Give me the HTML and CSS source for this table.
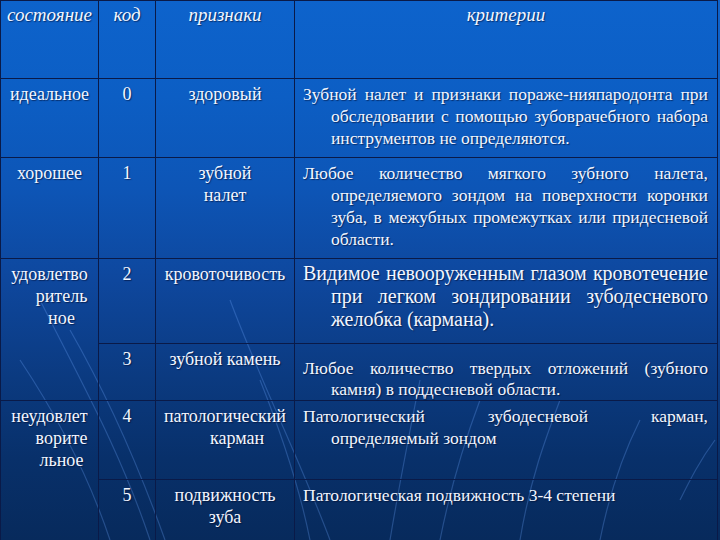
FILE: index.html
```html
<!DOCTYPE html>
<html>
<head>
<meta charset="utf-8">
<title>Индекс</title>
<link rel="stylesheet" href="styles.css">
</head>
<body>
<div class="slide">
<svg class="streaks" width="720" height="540" viewBox="0 0 720 540" aria-hidden="true">
  <g fill="none" stroke="#6fa8ff" stroke-width="1.2" opacity="0.28">
    <path d="M40 300 C80 380 120 450 150 540"/>
    <path d="M70 330 C110 400 140 470 165 540"/>
    <path d="M20 360 C60 420 90 480 110 540"/>
    <path d="M230 300 C260 380 300 460 330 540"/>
    <path d="M260 380 C280 430 300 490 310 540"/>
    <path d="M390 540 C400 480 410 430 420 380"/>
    <path d="M440 540 C450 490 465 440 480 400"/>
    <path d="M520 540 C530 480 545 440 560 400"/>
    <path d="M600 540 C610 490 625 450 640 420"/>
    <path d="M680 500 C690 480 700 460 715 440"/>
  </g>
</svg>
<table class="grid">
  <colgroup>
    <col class="c1"><col class="c2"><col class="c3"><col class="c4">
  </colgroup>
  <tr class="r0">
    <th class="h1">состояние</th>
    <th>код</th>
    <th>признаки</th>
    <th>критерии</th>
  </tr>
  <tr class="r1">
    <td class="st"><div class="hang">идеальное</div></td>
    <td class="cd">0</td>
    <td class="sg">здоровый</td>
    <td class="cr">
      <div class="l f j">Зубной налет и признаки пораже-нияпародонта при</div>
      <div class="l j">обследовании с помощью зубоврачебного набора</div>
      <div class="l">инструментов не определяются.</div>
    </td>
  </tr>
  <tr class="r2">
    <td class="st"><div class="hang">хорошее</div></td>
    <td class="cd">1</td>
    <td class="sg"><div>зубной</div><div>налет</div></td>
    <td class="cr">
      <div class="l f j">Любое количество мягкого зубного налета,</div>
      <div class="l j">определяемого зондом на поверхности коронки</div>
      <div class="l j">зуба, в межубных промежутках или придесневой</div>
      <div class="l">области.</div>
    </td>
  </tr>
  <tr class="r3">
    <td class="st" rowspan="2"><div class="hang">удовлетво<br>ритель<br>ное</div></td>
    <td class="cd">2</td>
    <td class="sg">кровоточивость</td>
    <td class="cr big">
      <div class="l f j">Видимое невооруженным глазом кровотечение</div>
      <div class="l j">при легком зондировании зубодесневого</div>
      <div class="l">желобка (кармана).</div>
    </td>
  </tr>
  <tr class="r3b">
    <td class="cd">3</td>
    <td class="sg">зубной камень</td>
    <td class="cr low">
      <div class="l f j">Любое количество твердых отложений (зубного</div>
      <div class="l">камня) в поддесневой области.</div>
    </td>
  </tr>
  <tr class="r4">
    <td class="st" rowspan="2"><div class="hang">неудовлет<br>ворите<br>льное</div></td>
    <td class="cd">4</td>
    <td class="sg"><div class="hang">патологический<br>карман</div></td>
    <td class="cr">
      <div class="l f j">Патологический зубодесневой карман,</div>
      <div class="l">определяемый зондом</div>
    </td>
  </tr>
  <tr class="r5">
    <td class="cd">5</td>
    <td class="sg"><div>подвижность</div><div>зуба</div></td>
    <td class="cr">
      <div class="l f">Патологическая подвижность 3-4 степени</div>
    </td>
  </tr>
</table>
</div>
</body>
</html>
```
FILE: styles.css
```css
html, body {
  margin: 0;
  padding: 0;
}
body {
  width: 720px;
  height: 540px;
  overflow: hidden;
  background: #072a5c;
  font-family: "Liberation Serif", serif;
}
.slide {
  position: relative;
  width: 720px;
  height: 540px;
  overflow: hidden;
  background: linear-gradient(180deg,
    #0d63cc 0%,
    #0c5ec4 18%,
    #0d55b6 35%,
    #0e479d 52%,
    #0b3a80 70%,
    #08306a 85%,
    #072a5c 100%);
  color: #f2f6ff;
}
.streaks {
  position: absolute;
  left: 0;
  top: 0;
}
.grid {
  position: relative;
  border-collapse: collapse;
  table-layout: fixed;
  width: 717px;
  font-family: "Liberation Serif", serif;
  font-size: 18px;
  line-height: 22px;
  text-shadow: 1px 1px 1px rgba(0, 10, 40, 0.55);
}
.c1 { width: 98px; }
.c2 { width: 57px; }
.c3 { width: 139px; }
.c4 { width: 423px; }
.grid th, .grid td {
  border: 1px solid #0a1a48;
  vertical-align: top;
  padding: 4px 2px 0 2px;
  font-family: "Liberation Serif", serif;
}
.grid th {
  font-weight: normal;
  font-style: italic;
  font-size: 19px;
  padding-top: 3px;
  text-align: center;
}
.r0 { height: 78px; }
.r1 { height: 79px; }
.r2 { height: 101px; }
.r3 { height: 85px; }
.r3b { height: 55px; }
.r4 { height: 79px; }
.r5 { height: 70px; }
.st, .cd, .sg { text-align: center; }
.hang {
  padding-left: 24px;
  text-indent: -24px;
}
.grid td.cr {
  padding: 4px 9px 0 8px;
  text-align: left;
  font-size: 17.5px;
}
.grid td.cr.big {
  font-size: 20px;
  line-height: 23px;
  padding-top: 3px;
}
.grid td.cr.low {
  padding-top: 14px;
  line-height: 21px;
}
.l {
  padding-left: 28px;
  white-space: nowrap;
}
.l.f { padding-left: 0; }
.j {
  text-align: justify;
  text-align-last: justify;
}
```
